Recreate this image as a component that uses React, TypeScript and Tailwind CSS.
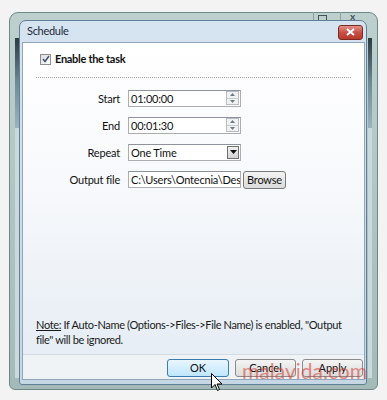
import { useState } from 'react';

const font = { fontFamily: 'Lato, "Noto Sans", Arial, sans-serif' };

function Spinner() {
  return (
    <div className="ml-auto mr-[1px] flex h-[14px] w-[13px] flex-col border border-[#b8bcc4] bg-[#f1f1f1]">
      <div className="flex flex-1 items-center justify-center border-b border-[#c7ccd4]">
        <svg width="5" height="3" viewBox="0 0 5 3"><path d="M0 3 L2.5 0 L5 3 Z" fill="#6c7a88" /></svg>
      </div>
      <div className="flex flex-1 items-center justify-center">
        <svg width="5" height="3" viewBox="0 0 5 3"><path d="M0 0 L5 0 L2.5 3 Z" fill="#6c7a88" /></svg>
      </div>
    </div>
  );
}

function Field({ value, children }: { value: string; children?: React.ReactNode }) {
  return (
    <div className="flex h-[17px] w-[113px] items-center overflow-hidden border border-[#abadb3] border-t-[#8e939c] bg-white pl-[2px] text-[11px] leading-none tracking-[-0.2px] text-[#111]">
      <span className="whitespace-nowrap">{value}</span>
      {children}
    </div>
  );
}

function DlgButton({ label, primary }: { label: string; primary?: boolean }) {
  return (
    <button
      type="button"
      className={
        primary
          ? 'h-[18px] w-[62px] rounded-[3px] border border-[#3d7bad] bg-gradient-to-b from-[#eaf6fd] to-[#bee6fd] text-[11px] text-[#111]'
          : 'h-[18px] w-[61px] rounded-[3px] border border-[#8a8a8a] bg-gradient-to-b from-[#f4f4f4] to-[#dcdcdc] text-[11px] text-[#111]'
      }
    >
      {label}
    </button>
  );
}

export default function App() {
  const [enabled, setEnabled] = useState(true);

  return (
    <div className="h-[400px] w-[387px] bg-[#f3f3f3] pl-[9px] pt-[12px]" style={font}>
      {/* window behind the dialog */}
      <div className="relative h-[378px] w-[369px] rounded-t-[9px] rounded-b-[6px] border border-[#6f8887] bg-gradient-to-b from-[#bdd0cd] to-[#a4bab9] pl-[9px] pt-[7px]">
        <div className="absolute left-[303px] top-[-1px] h-[8px] w-px bg-[#8aa2a0]" />
        <div className="absolute left-[330px] top-[-1px] h-[8px] w-px bg-[#8aa2a0]" />
        <div className="absolute left-[308px] top-[2px] h-[6px] w-[9px] border border-[#45545a]" />
        <div className="absolute left-[340px] top-[-2px] text-[10px] font-bold leading-none text-[#45545a]">x</div>
        <div className="absolute left-[5px] top-[25px] h-[90px] w-[4px] bg-gradient-to-b from-[#2c3b41] via-[#6e8c98] to-[#9ab4bf]" />
        <div className="absolute left-[5px] top-[115px] h-[250px] w-[4px] bg-[#c9d9dc]" />
        <div className="absolute left-[358px] top-[25px] h-[90px] w-[4px] bg-gradient-to-b from-[#2c3b41] via-[#6e8c98] to-[#9ab4bf]" />
        <div className="absolute left-[358px] top-[115px] h-[250px] w-[4px] bg-[#c9d9dc]" />

        {/* Schedule dialog */}
        <div className="relative z-10 flex h-[365px] w-[348px] flex-col rounded-t-[7px] rounded-b-[3px] border border-[#617f95] bg-gradient-to-b from-[#d6e3f0] to-[#c5d6e5] pb-[4px] pl-[2px] pr-[1px]">
          <div className="flex h-[21px] shrink-0 items-center justify-between pl-[5px] pr-[2px]">
            <span className="text-[11px] tracking-[-0.3px] text-[#1c2a3a]">Schedule</span>
            <div className="mt-[1px] flex h-[15px] w-[25px] items-center justify-center rounded-[3px] border border-[#7a2a22] bg-gradient-to-b from-[#e0928a] via-[#c75046] to-[#b8392c]">
              <svg width="9" height="8" viewBox="0 0 9 8">
                <path d="M1 1 L8 7 M8 1 L1 7" stroke="white" strokeWidth="2" />
              </svg>
            </div>
          </div>

          <div className="flex min-h-0 flex-1 flex-col border border-[#90a6ba]">
            <div className="flex min-h-0 flex-1 flex-col bg-gradient-to-b from-white via-[#f6f8fb] to-[#e6edf4] px-[13px] pt-[8px]">
              <label className="ml-[4px] flex items-center gap-[4px]" onClick={() => setEnabled(!enabled)}>
                <span className="flex h-[11px] w-[11px] items-center justify-center border border-[#8e8f8f] bg-gradient-to-br from-[#dcdcdc] to-white">
                  {enabled && (
                    <svg width="8" height="8" viewBox="0 0 8 8">
                      <path d="M1 4 L3 6.5 L7 1" stroke="#3d4f75" strokeWidth="1.5" fill="none" />
                    </svg>
                  )}
                </span>
                <span className="text-[11px] font-bold tracking-[-0.3px] text-[#111]">Enable the task</span>
              </label>

              <div className="mt-[9px] border-t border-dotted border-[#a8a8a8]" />

              <div className="mt-[12px] grid grid-cols-[84px_auto] items-center gap-x-[8px] gap-y-[10px] text-[11px] leading-none tracking-[-0.2px] text-[#111]">
                <span className="text-right">Start</span>
                <Field value="01:00:00"><Spinner /></Field>
                <span className="text-right">End</span>
                <Field value="00:01:30"><Spinner /></Field>
                <span className="text-right">Repeat</span>
                <Field value="One Time">
                  <div className="ml-auto mr-[1px] flex h-[13px] w-[12px] items-center justify-center border border-[#707070] bg-gradient-to-b from-[#f0f0f0] to-[#d4d4d4]">
                    <svg width="7" height="4" viewBox="0 0 7 4"><path d="M0 0 L7 0 L3.5 4 Z" fill="#111" /></svg>
                  </div>
                </Field>
                <span className="text-right">Output file</span>
                <div className="flex items-center gap-[2px]">
                  <Field value="C:\Users\Ontecnia\Desktop" />
                  <button type="button" className="h-[18px] w-[43px] rounded-[3px] border border-[#7a7a7a] bg-gradient-to-b from-[#f4f4f4] to-[#dadada] text-[11px] text-[#111]">
                    Browse
                  </button>
                </div>
              </div>

              <div className="flex-1" />
              <p className="mb-[7px] text-[11px] leading-[15px] tracking-[-0.35px] text-[#1a1a1a]">
                <span className="underline">Note:</span> If Auto-Name (Options-&gt;Files-&gt;File Name) is enabled, "Output file" will be ignored.
              </p>
            </div>
            <div className="flex h-[25px] shrink-0 items-center justify-end gap-[6px] border-t border-[#d3dbe3] bg-[#f0f3f6] pr-[1px] pt-[2px]">
              <DlgButton label="OK" primary />
              <DlgButton label="Cancel" />
              <DlgButton label="Apply" />
            </div>
          </div>

          {/* watermark */}
          <div className="pointer-events-none absolute left-[222px] top-[339px] text-[21px] leading-none text-[#d4473b] opacity-60">
            malavida.com
          </div>
          {/* mouse pointer */}
          <svg className="pointer-events-none absolute left-[191px] top-[352px]" width="12" height="19" viewBox="0 0 12 19">
            <path d="M0.5 0.5 L0.5 15 L4 11.5 L6.5 17.5 L8.5 16.5 L6 11 L11 11 Z" fill="white" stroke="black" strokeWidth="1" />
          </svg>
        </div>
      </div>
    </div>
  );
}
